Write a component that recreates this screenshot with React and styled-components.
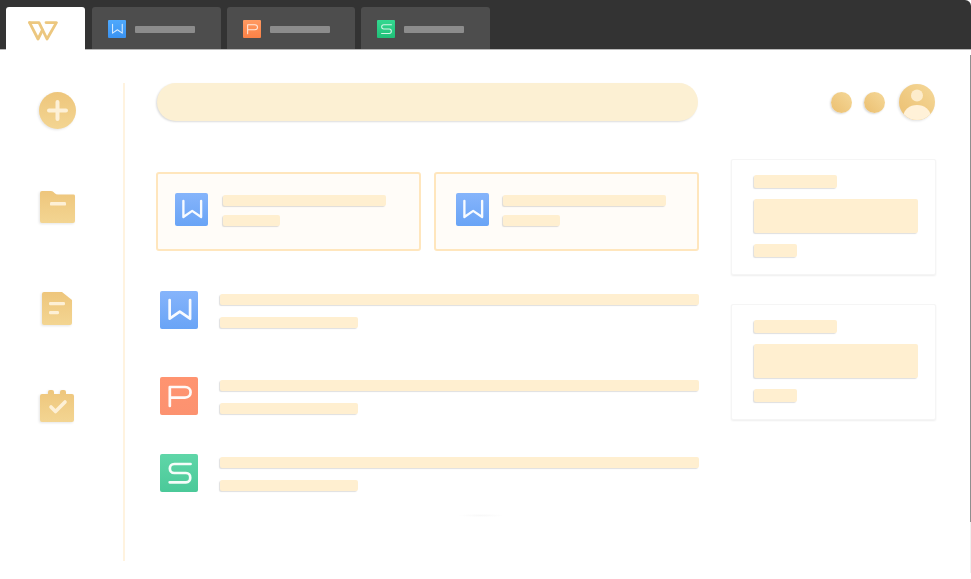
import React from "react";
import styled, { createGlobalStyle } from "styled-components";

const GlobalStyle = createGlobalStyle`
  html, body {
    margin: 0;
    padding: 0;
    background: #fff;
    font-family: "Liberation Sans", Arial, sans-serif;
  }
`;

const Frame = styled.div`
  width: 971px;
  height: 579px;
  overflow: hidden;
  box-sizing: border-box;
  background: #fff;
`;

const TabBar = styled.div`
  height: 50px;
  box-sizing: border-box;
  display: flex;
  align-items: flex-end;
  padding-left: 6px;
  gap: 6px;
  background: #333333;
  border-top-right-radius: 6px;
  box-shadow: inset 0 -1px 0 #b9b9b9;
`;

const HomeTab = styled.div`
  width: 79px;
  height: 43px;
  margin-right: 1px;
  display: flex;
  align-items: center;
  justify-content: center;
  padding: 5px 5px 0 0;
  box-sizing: border-box;
  background: #fff;
  border-radius: 3px 3px 0 0;
`;

const Tab = styled.div`
  width: 128.5px;
  height: 43px;
  box-sizing: border-box;
  display: flex;
  align-items: center;
  gap: 9px;
  padding: 1px 0 0 16px;
  background: #4d4d4d;
  border-bottom: 1px solid #b9b9b9;
  border-radius: 3px 3px 0 0;
`;

const TabLabel = styled.div`
  width: 60px;
  height: 7px;
  margin-top: 1px;
  background: #8c8c8c;
  border-radius: 1px;
`;

const Body = styled.div`
  position: relative;
  display: flex;
  padding-top: 33px;
  height: 529px;
  box-sizing: border-box;
`;

const RightEdge = styled.div`
  position: absolute;
  top: 5px;
  right: 0;
  width: 1px;
  height: 518px;
  background: linear-gradient(180deg, #8f8f8f 0, #8f8f8f 467px, #f0f0f0 467px, #f0f0f0 100%);
`;

const Sidebar = styled.nav`
  width: 125px;
  height: 478px;
  flex: none;
  box-sizing: border-box;
  display: flex;
  flex-direction: column;
  align-items: center;
  padding-right: 9px;
  border-right: 2px solid #fff3df;
`;

const SideIcon = styled.div`
  display: flex;
  margin-top: ${p => p.$top}px;
  filter: drop-shadow(-1px 1px 1px rgba(0, 0, 0, 0.1));
`;

const Main = styled.main`
  padding-left: 31px;
  flex: 1;
  min-width: 0;
`;

const TopRow = styled.div`
  display: flex;
  align-items: center;
  height: 38px;
`;

const Search = styled.div`
  width: 541px;
  height: 38px;
  margin-left: 1px;
  background: #fcf0d3;
  border-radius: 19px;
  box-shadow: -1px 1px 2px rgba(0, 0, 0, 0.14);
`;

const Actions = styled.div`
  display: flex;
  align-items: center;
  margin-left: 133px;
`;

const Dot = styled.div`
  width: 21px;
  height: 21px;
  margin-right: 12px;
  border-radius: 50%;
  background: linear-gradient(225deg, #f5d899, #ebbf70);
  box-shadow: -1px 1px 2px rgba(0, 0, 0, 0.16);
`;

const Avatar = styled.div`
  margin-left: 2px;
  display: flex;
  filter: drop-shadow(-1px 1px 1px rgba(0, 0, 0, 0.12));
`;

const Columns = styled.div`
  display: flex;
  gap: 32px;
  margin-top: 38px;
`;

const LeftColumn = styled.div`
  width: 543px;
  padding-top: 13px;
`;

const Cards = styled.div`
  display: flex;
  gap: 13px;
  height: 79px;
`;

const DocCard = styled.div`
  width: 265px;
  box-sizing: border-box;
  display: flex;
  align-items: center;
  gap: ${p => p.$gap}px;
  padding-left: ${p => p.$pad}px;
  padding-bottom: 4px;
  background: #fffcf8;
  border: 2px solid #ffe6bd;
  border-radius: 3px;
`;

const CardText = styled.div`
  display: flex;
  flex-direction: column;
  gap: 9px;
  margin-top: 2px;
`;

const Bar = styled.div`
  width: ${p => p.$w}px;
  height: ${p => p.$h || 11}px;
  background: #ffefd0;
  border-radius: 2px;
  box-shadow: -1px 1px 1px rgba(0, 0, 0, 0.13);
`;

const FileList = styled.div`
  display: flex;
  flex-direction: column;
  margin-top: 40px;
  padding-left: 4px;
`;

const FileRow = styled.div`
  display: flex;
  gap: 22px;
  margin-bottom: ${p => p.$gap}px;
`;

const FileText = styled.div`
  display: flex;
  flex-direction: column;
  gap: 12px;
  padding-top: 3px;
`;

const Smudge = styled.div`
  width: 44px;
  height: 3px;
  margin: 22px 0 0 303px;
  background: radial-gradient(ellipse at center, #f8f8f8, #ffffff 75%);
`;

const RightColumn = styled.aside`
  width: 205px;
  display: flex;
  flex-direction: column;
  gap: 29px;
`;

const Panel = styled.div`
  height: 116px;
  box-sizing: border-box;
  display: flex;
  flex-direction: column;
  align-items: flex-start;
  padding: 15px 0 0 22px;
  background: #fff;
  border: 1px solid #f5f5f5;
  border-radius: 2px;
  box-shadow: 0 1px 2px rgba(0, 0, 0, 0.07);
`;

const PanelBig = styled(Bar)`
  margin: 11px 0;
`;

const Tile = styled.div`
  width: ${p => p.$size}px;
  height: ${p => p.$size}px;
  flex: none;
  border-radius: ${p => (p.$size > 20 ? 2 : 1)}px;
  display: flex;
  align-items: center;
  justify-content: center;
  background: linear-gradient(180deg, ${p => p.$from}, ${p => p.$to});
`;

const glyphs = {
  w: "M6.1 5.7 V17.5 L12.5 13 L19 17.5 V5.7",
  p: "M6.2 18.3 V6.3 H15.8 C20.5 6.3 20.5 13 15.8 13 H6.6",
  s: "M19.3 6.3 H9 C5.3 6.3 5.3 12 9 12 H16.4 C20 12 20 17.9 16.4 17.9 H6.1",
};

const FileTile = ({ kind, size, from, to }) => (
  <Tile $size={size} $from={from} $to={to}>
    <svg width={size} height={size} viewBox="0 0 24 24" fill="none">
      <path d={glyphs[kind]} stroke="#fff" strokeWidth={size > 20 ? 1.7 : 1.4} strokeLinecap="round" strokeLinejoin="round" opacity={size > 20 ? 0.95 : 0.8} />
    </svg>
  </Tile>
);

const pale = {
  w: ["#86b4fb", "#69a4f6"],
  p: ["#ff9470", "#fc9270"],
  s: ["#5fd6a8", "#4bc999"],
};

const vivid = {
  w: ["#4fa9fd", "#3a92f0"],
  p: ["#ff9a62", "#fa8146"],
  s: ["#33d890", "#20bf78"],
};

const BigTile = ({ kind, size }) => (
  <FileTile kind={kind} size={size} from={pale[kind][0]} to={pale[kind][1]} />
);

const Gold = ({ id }) => (
  <defs>
    <linearGradient id={id} x1="0" y1="0" x2="0" y2="1">
      <stop offset="0" stopColor="#eec67c" />
      <stop offset="1" stopColor="#f3d592" />
    </linearGradient>
  </defs>
);

const PlusIcon = () => (
  <svg width="37" height="37" viewBox="0 0 37 37">
    <Gold id="g-plus" />
    <circle cx="18.5" cy="18.5" r="18.5" fill="url(#g-plus)" />
    <path d="M18.5 10 V27 M10 18.5 H27" stroke="#fdf0d6" strokeWidth="4" strokeLinecap="round" />
  </svg>
);

const FolderIcon = () => (
  <svg width="35" height="32" viewBox="0 0 35 32">
    <Gold id="g-folder" />
    <path d="M0 2 Q0 0 2 0 H11 Q13 0 14.5 2 Q16 3.6 18 3.6 H33.5 Q35 3.6 35 5 V30 Q35 32 33 32 H2 Q0 32 0 30 Z" fill="url(#g-folder)" />
    <rect x="10" y="11" width="16" height="3.6" rx="1.2" fill="#fdf0d6" />
  </svg>
);

const DocIcon = () => (
  <svg width="30" height="33" viewBox="0 0 30 33">
    <Gold id="g-doc" />
    <path d="M0 2 Q0 0 2 0 H20 L30 8 V31 Q30 33 28 33 H2 Q0 33 0 31 Z" fill="url(#g-doc)" />
    <rect x="7" y="10" width="16" height="3.2" rx="1.2" fill="#fdf0d6" />
    <rect x="7" y="19" width="10" height="3.2" rx="1.2" fill="#fdf0d6" />
  </svg>
);

const TaskIcon = () => (
  <svg width="34" height="32" viewBox="0 0 34 32">
    <Gold id="g-task" />
    <path d="M8 2 Q8 0 10 0 H12 Q14 0 14 2 V4 H20 V2 Q20 0 22 0 H24 Q26 0 26 2 V4 H32 Q34 4 34 6 V30 Q34 32 32 32 H2 Q0 32 0 30 V6 Q0 4 2 4 H8 Z" fill="url(#g-task)" />
    <path d="M11 17 L15.5 21.5 L25 12" fill="none" stroke="#fdf0d6" strokeWidth="3.6" strokeLinecap="round" strokeLinejoin="round" />
  </svg>
);

const UserIcon = () => (
  <svg width="36" height="36" viewBox="0 0 36 36">
    <defs>
      <linearGradient id="g-user" x1="1" y1="0" x2="0" y2="1">
        <stop offset="0" stopColor="#f5d899" />
        <stop offset="1" stopColor="#ebbf70" />
      </linearGradient>
      <clipPath id="user-clip">
        <circle cx="18" cy="18" r="18" />
      </clipPath>
    </defs>
    <circle cx="18" cy="18" r="18" fill="url(#g-user)" />
    <g clipPath="url(#user-clip)">
      <ellipse cx="18" cy="32" rx="13.5" ry="11" fill="#fff1d8" />
    </g>
    <circle cx="18" cy="11.5" r="6" fill="#fdeccb" />
  </svg>
);

const WpsLogo = () => (
  <svg width="30" height="20" viewBox="0 0 30 20" fill="none" stroke="#ecc77f" strokeWidth="2.8" strokeLinejoin="round" strokeLinecap="round">
    <path d="M1.6 1.6 H11 L19 18 L28.4 1.6 H18" />
    <path d="M1.6 1.6 L10 18 L14.5 9" />
  </svg>
);

const files = [
  { kind: "w", gap: 48 },
  { kind: "p", gap: 39 },
  { kind: "s", gap: 0 },
];

const SidePanel = () => (
  <Panel>
    <Bar $w={83} $h={13} />
    <PanelBig $w={164} $h={34} />
    <Bar $w={43} $h={13} />
  </Panel>
);

export default function App() {
  return (
    <Frame>
      <GlobalStyle />
      <TabBar>
        <HomeTab>
          <WpsLogo />
        </HomeTab>
        {["w", "p", "s"].map(kind => (
          <Tab key={kind}>
            <FileTile kind={kind} size={18} from={vivid[kind][0]} to={vivid[kind][1]} />
            <TabLabel />
          </Tab>
        ))}
      </TabBar>
      <Body>
        <RightEdge />
        <Sidebar>
          <SideIcon $top={9}><PlusIcon /></SideIcon>
          <SideIcon $top={62}><FolderIcon /></SideIcon>
          <SideIcon $top={69}><DocIcon /></SideIcon>
          <SideIcon $top={65}><TaskIcon /></SideIcon>
        </Sidebar>
        <Main>
          <TopRow>
            <Search />
            <Actions>
              <Dot />
              <Dot />
              <Avatar><UserIcon /></Avatar>
            </Actions>
          </TopRow>
          <Columns>
            <LeftColumn>
              <Cards>
                <DocCard $pad={17} $gap={15}>
                  <BigTile kind="w" size={33} />
                  <CardText>
                    <Bar $w={163} />
                    <Bar $w={57} />
                  </CardText>
                </DocCard>
                <DocCard $pad={20} $gap={14}>
                  <BigTile kind="w" size={33} />
                  <CardText>
                    <Bar $w={163} />
                    <Bar $w={57} />
                  </CardText>
                </DocCard>
              </Cards>
              <FileList>
                {files.map(file => (
                  <FileRow key={file.kind} $gap={file.gap}>
                    <BigTile kind={file.kind} size={38} />
                    <FileText>
                      <Bar $w={479} />
                      <Bar $w={138} />
                    </FileText>
                  </FileRow>
                ))}
              </FileList>
              <Smudge />
            </LeftColumn>
            <RightColumn>
              <SidePanel />
              <SidePanel />
            </RightColumn>
          </Columns>
        </Main>
      </Body>
    </Frame>
  );
}
